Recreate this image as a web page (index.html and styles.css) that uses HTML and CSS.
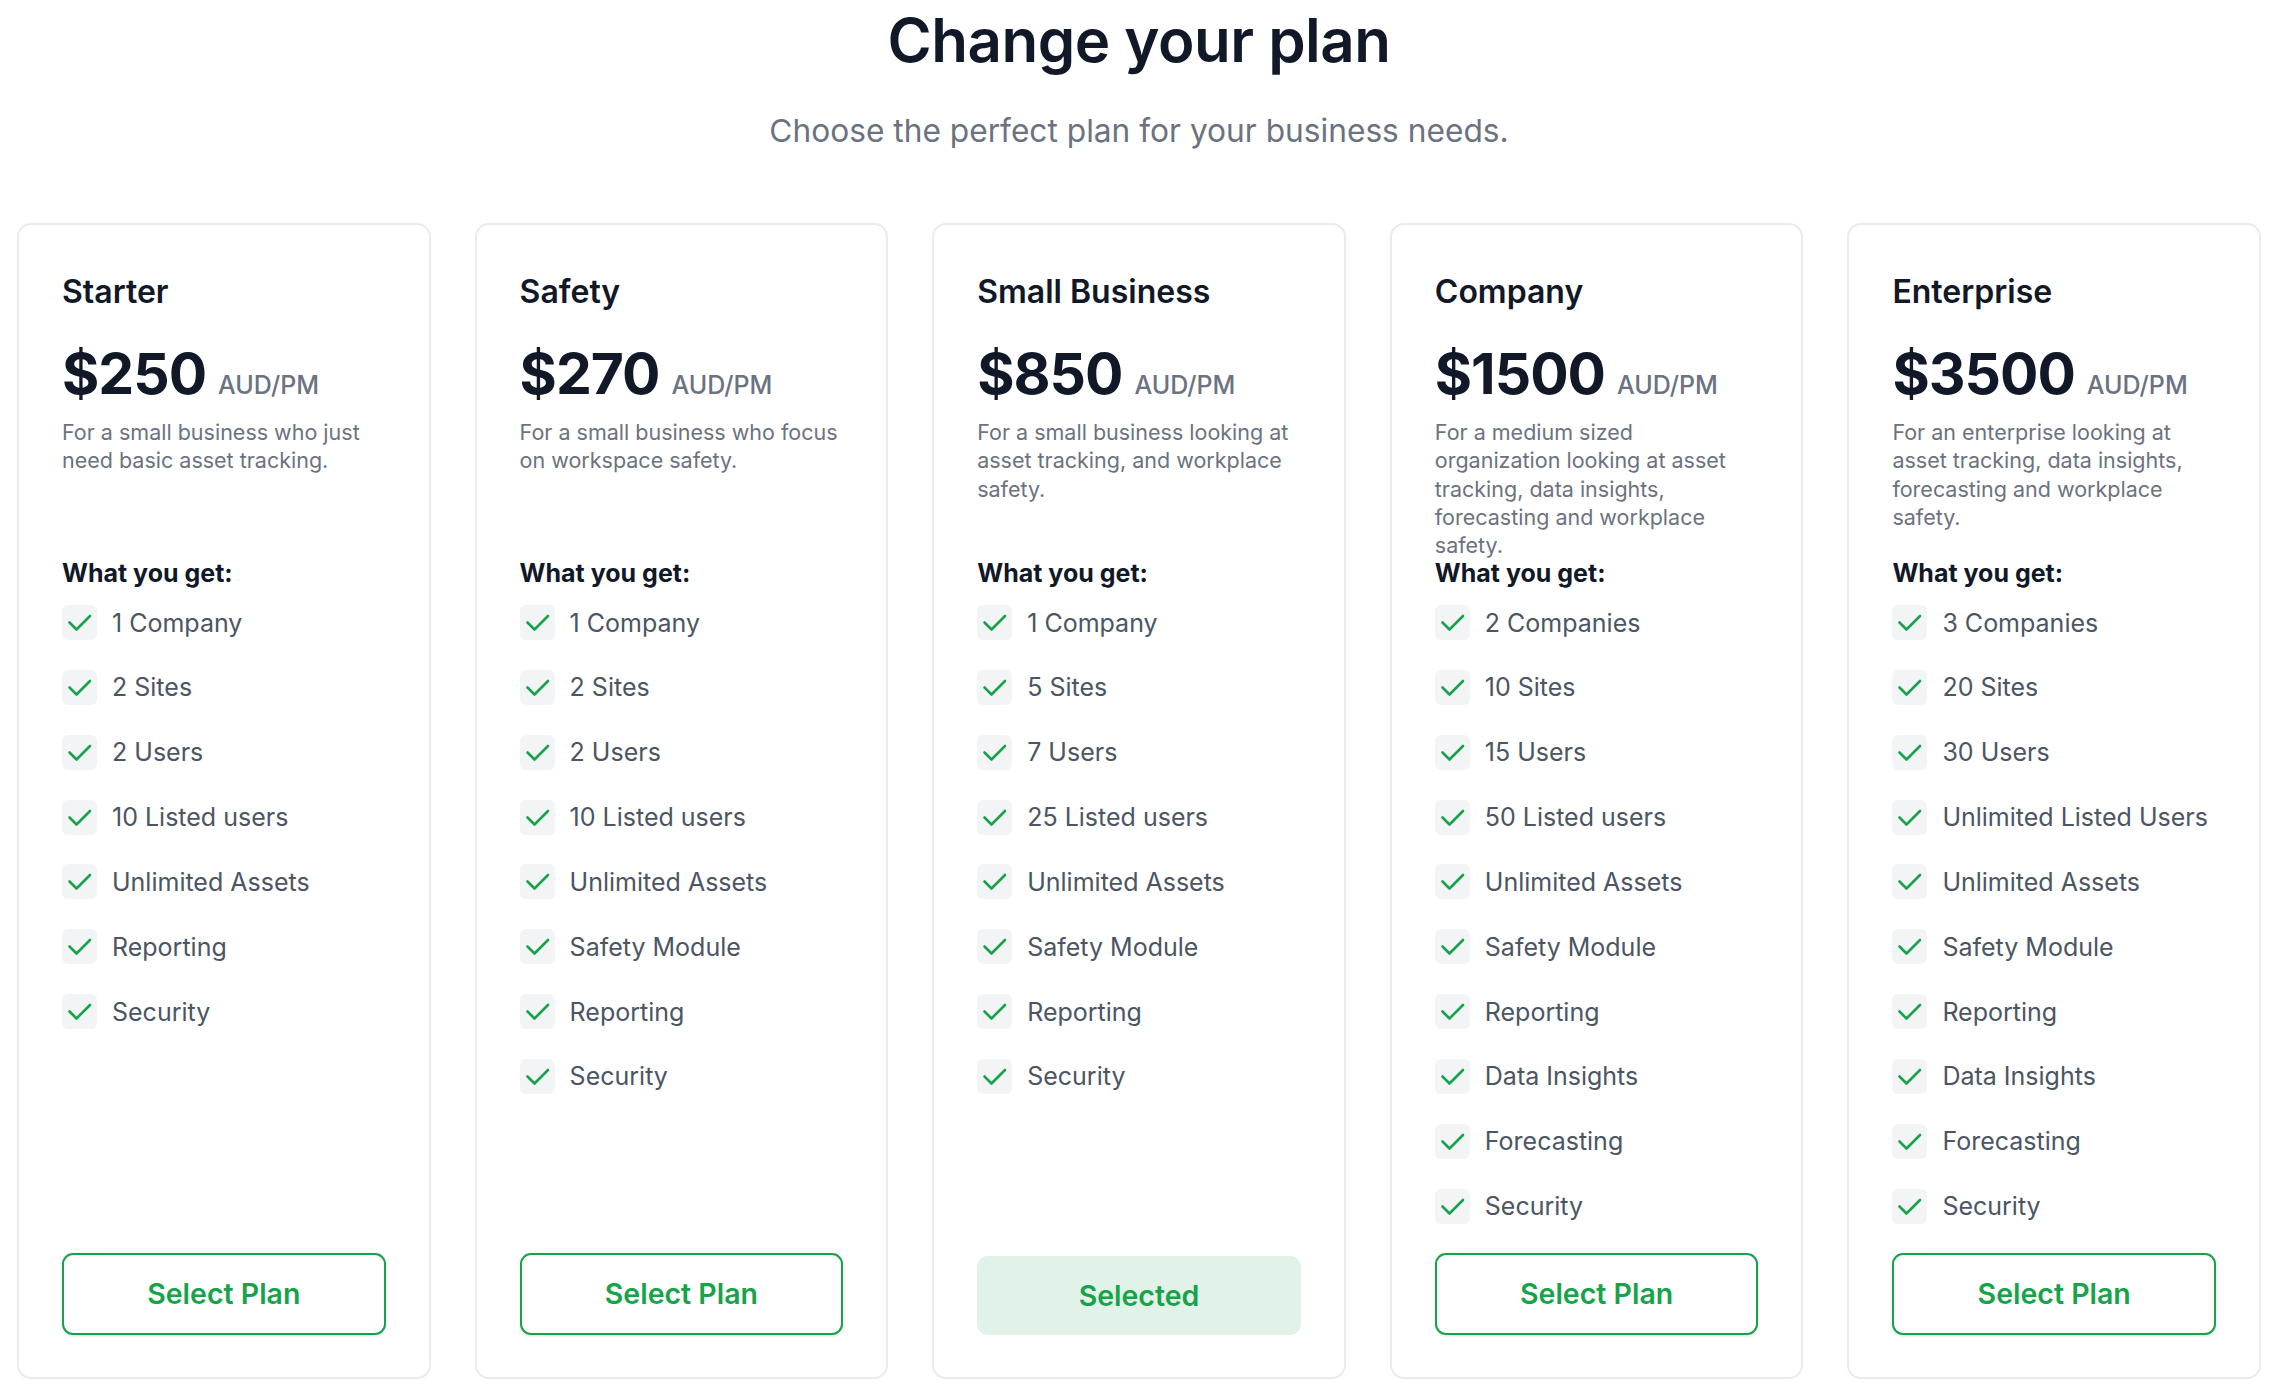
FILE: index.html
```html
<!DOCTYPE html>
<html lang="en">
<head>
<meta charset="utf-8">
<title>Change your plan</title>
<link rel="stylesheet" href="styles.css">
</head>
<body>
<main class="page">
  <header class="intro">
    <h1 class="intro-title">Change your plan</h1>
    <p class="intro-sub">Choose the perfect plan for your business needs.</p>
  </header>

  <section class="plans">
    <article class="plan">
      <h2 class="plan-name">Starter</h2>
      <div class="plan-price"><span class="amount">$250</span><span class="unit">AUD/PM</span></div>
      <p class="plan-desc">For a small business who just need basic asset tracking.</p>
      <h3 class="plan-label">What you get:</h3>
      <ul class="features">
        <li><span class="tick"><svg viewBox="0 0 35 35"><polyline points="7.5,17.5 14.5,24.5 28,11"/></svg></span>1 Company</li>
        <li><span class="tick"><svg viewBox="0 0 35 35"><polyline points="7.5,17.5 14.5,24.5 28,11"/></svg></span>2 Sites</li>
        <li><span class="tick"><svg viewBox="0 0 35 35"><polyline points="7.5,17.5 14.5,24.5 28,11"/></svg></span>2 Users</li>
        <li><span class="tick"><svg viewBox="0 0 35 35"><polyline points="7.5,17.5 14.5,24.5 28,11"/></svg></span>10 Listed users</li>
        <li><span class="tick"><svg viewBox="0 0 35 35"><polyline points="7.5,17.5 14.5,24.5 28,11"/></svg></span>Unlimited Assets</li>
        <li><span class="tick"><svg viewBox="0 0 35 35"><polyline points="7.5,17.5 14.5,24.5 28,11"/></svg></span>Reporting</li>
        <li><span class="tick"><svg viewBox="0 0 35 35"><polyline points="7.5,17.5 14.5,24.5 28,11"/></svg></span>Security</li>
      </ul>
      <button class="plan-btn" type="button">Select Plan</button>
    </article>

    <article class="plan">
      <h2 class="plan-name">Safety</h2>
      <div class="plan-price"><span class="amount">$270</span><span class="unit">AUD/PM</span></div>
      <p class="plan-desc">For a small business who focus on workspace safety.</p>
      <h3 class="plan-label">What you get:</h3>
      <ul class="features">
        <li><span class="tick"><svg viewBox="0 0 35 35"><polyline points="7.5,17.5 14.5,24.5 28,11"/></svg></span>1 Company</li>
        <li><span class="tick"><svg viewBox="0 0 35 35"><polyline points="7.5,17.5 14.5,24.5 28,11"/></svg></span>2 Sites</li>
        <li><span class="tick"><svg viewBox="0 0 35 35"><polyline points="7.5,17.5 14.5,24.5 28,11"/></svg></span>2 Users</li>
        <li><span class="tick"><svg viewBox="0 0 35 35"><polyline points="7.5,17.5 14.5,24.5 28,11"/></svg></span>10 Listed users</li>
        <li><span class="tick"><svg viewBox="0 0 35 35"><polyline points="7.5,17.5 14.5,24.5 28,11"/></svg></span>Unlimited Assets</li>
        <li><span class="tick"><svg viewBox="0 0 35 35"><polyline points="7.5,17.5 14.5,24.5 28,11"/></svg></span>Safety Module</li>
        <li><span class="tick"><svg viewBox="0 0 35 35"><polyline points="7.5,17.5 14.5,24.5 28,11"/></svg></span>Reporting</li>
        <li><span class="tick"><svg viewBox="0 0 35 35"><polyline points="7.5,17.5 14.5,24.5 28,11"/></svg></span>Security</li>
      </ul>
      <button class="plan-btn" type="button">Select Plan</button>
    </article>

    <article class="plan">
      <h2 class="plan-name">Small Business</h2>
      <div class="plan-price"><span class="amount">$850</span><span class="unit">AUD/PM</span></div>
      <p class="plan-desc">For a small business looking at asset tracking, and workplace safety.</p>
      <h3 class="plan-label">What you get:</h3>
      <ul class="features">
        <li><span class="tick"><svg viewBox="0 0 35 35"><polyline points="7.5,17.5 14.5,24.5 28,11"/></svg></span>1 Company</li>
        <li><span class="tick"><svg viewBox="0 0 35 35"><polyline points="7.5,17.5 14.5,24.5 28,11"/></svg></span>5 Sites</li>
        <li><span class="tick"><svg viewBox="0 0 35 35"><polyline points="7.5,17.5 14.5,24.5 28,11"/></svg></span>7 Users</li>
        <li><span class="tick"><svg viewBox="0 0 35 35"><polyline points="7.5,17.5 14.5,24.5 28,11"/></svg></span>25 Listed users</li>
        <li><span class="tick"><svg viewBox="0 0 35 35"><polyline points="7.5,17.5 14.5,24.5 28,11"/></svg></span>Unlimited Assets</li>
        <li><span class="tick"><svg viewBox="0 0 35 35"><polyline points="7.5,17.5 14.5,24.5 28,11"/></svg></span>Safety Module</li>
        <li><span class="tick"><svg viewBox="0 0 35 35"><polyline points="7.5,17.5 14.5,24.5 28,11"/></svg></span>Reporting</li>
        <li><span class="tick"><svg viewBox="0 0 35 35"><polyline points="7.5,17.5 14.5,24.5 28,11"/></svg></span>Security</li>
      </ul>
      <button class="plan-btn is-selected" type="button">Selected</button>
    </article>

    <article class="plan">
      <h2 class="plan-name">Company</h2>
      <div class="plan-price"><span class="amount">$1500</span><span class="unit">AUD/PM</span></div>
      <p class="plan-desc">For a medium sized organization looking at asset tracking, data insights, forecasting and workplace safety.</p>
      <h3 class="plan-label">What you get:</h3>
      <ul class="features">
        <li><span class="tick"><svg viewBox="0 0 35 35"><polyline points="7.5,17.5 14.5,24.5 28,11"/></svg></span>2 Companies</li>
        <li><span class="tick"><svg viewBox="0 0 35 35"><polyline points="7.5,17.5 14.5,24.5 28,11"/></svg></span>10 Sites</li>
        <li><span class="tick"><svg viewBox="0 0 35 35"><polyline points="7.5,17.5 14.5,24.5 28,11"/></svg></span>15 Users</li>
        <li><span class="tick"><svg viewBox="0 0 35 35"><polyline points="7.5,17.5 14.5,24.5 28,11"/></svg></span>50 Listed users</li>
        <li><span class="tick"><svg viewBox="0 0 35 35"><polyline points="7.5,17.5 14.5,24.5 28,11"/></svg></span>Unlimited Assets</li>
        <li><span class="tick"><svg viewBox="0 0 35 35"><polyline points="7.5,17.5 14.5,24.5 28,11"/></svg></span>Safety Module</li>
        <li><span class="tick"><svg viewBox="0 0 35 35"><polyline points="7.5,17.5 14.5,24.5 28,11"/></svg></span>Reporting</li>
        <li><span class="tick"><svg viewBox="0 0 35 35"><polyline points="7.5,17.5 14.5,24.5 28,11"/></svg></span>Data Insights</li>
        <li><span class="tick"><svg viewBox="0 0 35 35"><polyline points="7.5,17.5 14.5,24.5 28,11"/></svg></span>Forecasting</li>
        <li><span class="tick"><svg viewBox="0 0 35 35"><polyline points="7.5,17.5 14.5,24.5 28,11"/></svg></span>Security</li>
      </ul>
      <button class="plan-btn" type="button">Select Plan</button>
    </article>

    <article class="plan">
      <h2 class="plan-name">Enterprise</h2>
      <div class="plan-price"><span class="amount">$3500</span><span class="unit">AUD/PM</span></div>
      <p class="plan-desc">For an enterprise looking at asset tracking, data insights, forecasting and workplace safety.</p>
      <h3 class="plan-label">What you get:</h3>
      <ul class="features">
        <li><span class="tick"><svg viewBox="0 0 35 35"><polyline points="7.5,17.5 14.5,24.5 28,11"/></svg></span>3 Companies</li>
        <li><span class="tick"><svg viewBox="0 0 35 35"><polyline points="7.5,17.5 14.5,24.5 28,11"/></svg></span>20 Sites</li>
        <li><span class="tick"><svg viewBox="0 0 35 35"><polyline points="7.5,17.5 14.5,24.5 28,11"/></svg></span>30 Users</li>
        <li><span class="tick"><svg viewBox="0 0 35 35"><polyline points="7.5,17.5 14.5,24.5 28,11"/></svg></span>Unlimited Listed Users</li>
        <li><span class="tick"><svg viewBox="0 0 35 35"><polyline points="7.5,17.5 14.5,24.5 28,11"/></svg></span>Unlimited Assets</li>
        <li><span class="tick"><svg viewBox="0 0 35 35"><polyline points="7.5,17.5 14.5,24.5 28,11"/></svg></span>Safety Module</li>
        <li><span class="tick"><svg viewBox="0 0 35 35"><polyline points="7.5,17.5 14.5,24.5 28,11"/></svg></span>Reporting</li>
        <li><span class="tick"><svg viewBox="0 0 35 35"><polyline points="7.5,17.5 14.5,24.5 28,11"/></svg></span>Data Insights</li>
        <li><span class="tick"><svg viewBox="0 0 35 35"><polyline points="7.5,17.5 14.5,24.5 28,11"/></svg></span>Forecasting</li>
        <li><span class="tick"><svg viewBox="0 0 35 35"><polyline points="7.5,17.5 14.5,24.5 28,11"/></svg></span>Security</li>
      </ul>
      <button class="plan-btn" type="button">Select Plan</button>
    </article>
  </section>
</main>
</body>
</html>
```

FILE: styles.css
```css
* { box-sizing: border-box; }

html, body {
  margin: 0;
  padding: 0;
  background: #ffffff;
}

body {
  font-family: Inter, "Noto Sans", "Liberation Sans", sans-serif;
  color: #111827;
}

.page {
  padding: 4px 23px 0 17px;
}

.intro {
  text-align: center;
}

.intro-title {
  margin: 0;
  font-size: 60px;
  line-height: 72px;
  font-weight: 600;
  color: #111827;
  letter-spacing: -0.5px;
}

.intro-sub {
  margin: 35px 0 0;
  font-size: 31.7px;
  line-height: 40px;
  font-weight: 400;
  color: #6b7280;
}

.plans {
  display: grid;
  grid-template-columns: repeat(5, 1fr);
  gap: 44px;
  margin-top: 72px;
}

.plan {
  display: flex;
  flex-direction: column;
  border: 2px solid #ebebeb;
  border-radius: 14px;
  padding: 47px 43px 42px;
  background: #ffffff;
}

.plan-name {
  margin: 0;
  font-size: 32px;
  line-height: 40px;
  font-weight: 600;
  color: #111827;
}

.plan-price {
  display: flex;
  align-items: baseline;
  margin-top: 30px;
  height: 64px;
}

.amount {
  font-size: 57px;
  line-height: 64px;
  font-weight: 700;
  color: #111827;
  letter-spacing: -1px;
}

.unit {
  margin-left: 12px;
  font-size: 25px;
  font-weight: 500;
  color: #6b7280;
}

.plan-desc {
  margin: 12px 0 0;
  height: 139px;
  font-size: 21.5px;
  line-height: 28.33px;
  color: #6b7280;
}

.plan-label {
  margin: 0;
  font-size: 25px;
  line-height: 32px;
  font-weight: 700;
  color: #111827;
}

.features {
  list-style: none;
  margin: 16px 0 29.4px;
  padding: 0;
  flex: 1;
  display: flex;
  flex-direction: column;
  gap: 29.85px;
}

.features li {
  display: flex;
  align-items: center;
  gap: 15px;
  height: 35px;
  font-size: 25px;
  color: #4b5563;
}

.tick {
  flex: none;
  width: 35px;
  height: 35px;
  border-radius: 6px;
  background: #f3f4f6;
}

.tick svg {
  display: block;
  width: 35px;
  height: 35px;
  fill: none;
  stroke: #16a34a;
  stroke-width: 2.6;
  stroke-linecap: round;
  stroke-linejoin: round;
}

.plan-btn {
  width: 100%;
  height: 82px;
  border: 2px solid #16a34a;
  border-radius: 11px;
  background: #ffffff;
  box-shadow: 0 1px 3px rgba(0, 0, 0, 0.12);
  font-family: inherit;
  font-size: 28.5px;
  font-weight: 600;
  color: #16a34a;
  cursor: pointer;
}

.plan-btn.is-selected {
  height: 79px;
  border: none;
  background: #e1f2e8;
  box-shadow: none;
}
```
